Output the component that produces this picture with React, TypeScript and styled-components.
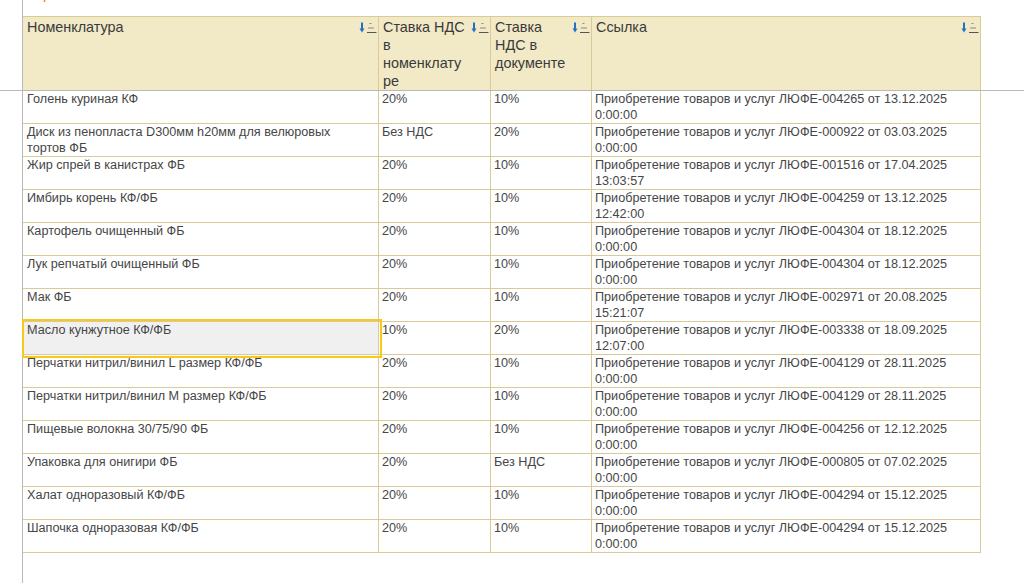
import React from "react";
import styled, { createGlobalStyle } from "styled-components";

const Global = createGlobalStyle`
  html, body { margin: 0; padding: 0; background: #fff; }
  body { font-family: "Liberation Sans", Arial, sans-serif; }
  * { box-sizing: border-box; }
`;

const COLS = "356px 112px 101px 389px";
const TAN = "#d9cb98";
const GREY = "#b9b9b9";

const Page = styled.div`
  width: 1024px;
  height: 583px;
  display: flex;
  flex-direction: column;
  overflow: hidden;
`;

const TopBand = styled.div`
  display: flex;
  border-bottom: 1px solid ${GREY};
`;

const BodyBand = styled.div`
  display: flex;
  flex: 1;
`;

const Gutter = styled.div`
  width: 23px;
  flex: none;
  border-right: 1px solid ${GREY};
`;

const TopMain = styled.div`
  display: flex;
  flex-direction: column;
`;

const TitleStrip = styled.div`
  height: 16px;
  overflow: hidden;
  padding-left: 10px;
`;

const TitleText = styled.div`
  margin-top: -15px;
  font-size: 14px;
  line-height: 18px;
  color: #e8741e;
  white-space: nowrap;
`;

const HeaderRow = styled.div`
  display: grid;
  grid-template-columns: ${COLS};
  height: 74px;
  background: #f2e9c7;
  border-top: 1px solid ${TAN};
`;

const HeadCell = styled.div`
  display: flex;
  align-items: flex-start;
  border-right: 1px solid ${TAN};
  padding: 1px 1px 0 4px;
  overflow: hidden;
`;

const HeadText = styled.div`
  flex: 1;
  min-width: 0;
  margin-right: 2px;
  font-size: 14.4px;
  line-height: 18px;
  color: #3a3a3a;
  overflow-wrap: break-word;
`;

const SortIcon = styled.svg`
  flex: none;
  margin-top: 4px;
`;

const Rows = styled.div`
  display: flex;
  flex-direction: column;
`;

const Row = styled.div`
  display: grid;
  grid-template-columns: ${COLS};
  height: 33px;
`;

const Cell = styled.div<{ $selected?: boolean; $pad?: number; $padRight?: number }>`
  position: relative;
  border-right: 1px solid ${TAN};
  border-bottom: 1px solid ${TAN};
  padding: 0 ${(p) => p.$padRight ?? 2}px 0 ${(p) => p.$pad ?? 3}px;
  font-size: 12.65px;
  line-height: 16px;
  color: #464646;
  background: ${(p) => (p.$selected ? "#f0f0f0" : "transparent")};
  ${(p) =>
    p.$selected
      ? `
    z-index: 1;
    &::after {
      content: "";
      position: absolute;
      top: -3px;
      left: -1px;
      right: -4px;
      bottom: -4px;
      border: 2px solid #f8c81c;
      pointer-events: none;
    }
  `
      : ""}
`;

const Sort = () => (
  <SortIcon width="18" height="12" viewBox="0 0 18 12">
    <path d="M3 0.5 V7" stroke="#2371c4" strokeWidth="2" />
    <path d="M0.5 6.5 H5.5 L3 10.5 Z" fill="#2371c4" />
    <path d="M10.5 1.5 H12.5" stroke="#8a8a8a" strokeWidth="1" />
    <path d="M9 6 H15" stroke="#8a8a8a" strokeWidth="1" />
    <path d="M8 10.5 H17.5" stroke="#555" strokeWidth="1" />
  </SortIcon>
);

type R = { name: string; nom: string; doc: string; ref: string; time: string };

const data: R[] = [
  { name: "Голень куриная КФ", nom: "20%", doc: "10%", ref: "ЛЮФЕ-004265 от 13.12.2025", time: "0:00:00" },
  { name: "Диск из пенопласта D300мм h20мм для велюровых тортов ФБ", nom: "Без НДС", doc: "20%", ref: "ЛЮФЕ-000922 от 03.03.2025", time: "0:00:00" },
  { name: "Жир спрей в канистрах ФБ", nom: "20%", doc: "10%", ref: "ЛЮФЕ-001516 от 17.04.2025", time: "13:03:57" },
  { name: "Имбирь корень КФ/ФБ", nom: "20%", doc: "10%", ref: "ЛЮФЕ-004259 от 13.12.2025", time: "12:42:00" },
  { name: "Картофель очищенный ФБ", nom: "20%", doc: "10%", ref: "ЛЮФЕ-004304 от 18.12.2025", time: "0:00:00" },
  { name: "Лук репчатый очищенный ФБ", nom: "20%", doc: "10%", ref: "ЛЮФЕ-004304 от 18.12.2025", time: "0:00:00" },
  { name: "Мак ФБ", nom: "20%", doc: "10%", ref: "ЛЮФЕ-002971 от 20.08.2025", time: "15:21:07" },
  { name: "Масло кунжутное КФ/ФБ", nom: "10%", doc: "20%", ref: "ЛЮФЕ-003338 от 18.09.2025", time: "12:07:00" },
  { name: "Перчатки нитрил/винил L размер КФ/ФБ", nom: "20%", doc: "10%", ref: "ЛЮФЕ-004129 от 28.11.2025", time: "0:00:00" },
  { name: "Перчатки нитрил/винил M размер КФ/ФБ", nom: "20%", doc: "10%", ref: "ЛЮФЕ-004129 от 28.11.2025", time: "0:00:00" },
  { name: "Пищевые волокна 30/75/90 ФБ", nom: "20%", doc: "10%", ref: "ЛЮФЕ-004256 от 12.12.2025", time: "0:00:00" },
  { name: "Упаковка для онигири ФБ", nom: "20%", doc: "Без НДС", ref: "ЛЮФЕ-000805 от 07.02.2025", time: "0:00:00" },
  { name: "Халат одноразовый КФ/ФБ", nom: "20%", doc: "10%", ref: "ЛЮФЕ-004294 от 15.12.2025", time: "0:00:00" },
  { name: "Шапочка одноразовая КФ/ФБ", nom: "20%", doc: "10%", ref: "ЛЮФЕ-004294 от 15.12.2025", time: "0:00:00" },
];

export default function App() {
  return (
    <Page>
      <Global />
      <TopBand>
        <Gutter />
        <TopMain>
          <TitleStrip>
            <TitleText>Сравнение ставок</TitleText>
          </TitleStrip>
          <HeaderRow>
            <HeadCell>
              <HeadText>Номенклатура</HeadText>
              <Sort />
            </HeadCell>
            <HeadCell>
              <HeadText>Ставка НДС в номенклатуре</HeadText>
              <Sort />
            </HeadCell>
            <HeadCell>
              <HeadText>Ставка НДС в документе</HeadText>
              <Sort />
            </HeadCell>
            <HeadCell>
              <HeadText>Ссылка</HeadText>
              <Sort />
            </HeadCell>
          </HeaderRow>
        </TopMain>
      </TopBand>
      <BodyBand>
        <Gutter />
        <Rows>
          {data.map((r, i) => (
            <Row key={i}>
              <Cell $pad={4} $padRight={12} $selected={i === 7}>{r.name}</Cell>
              <Cell>{r.nom}</Cell>
              <Cell>{r.doc}</Cell>
              <Cell>
                Приобретение товаров и услуг {r.ref} {r.time}
              </Cell>
            </Row>
          ))}
        </Rows>
      </BodyBand>
    </Page>
  );
}
